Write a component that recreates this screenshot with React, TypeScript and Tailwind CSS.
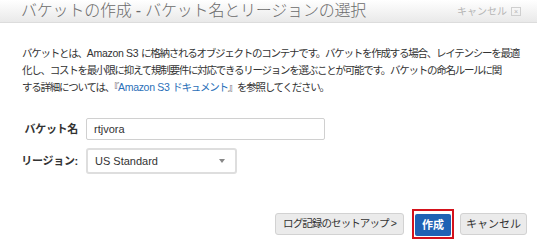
const font = "font-['Liberation_Sans','Noto_Sans_CJK_JP',sans-serif]";

export default function App() {
  return (
    <div className={`w-[537px] h-[241px] bg-white overflow-hidden flex flex-col ${font}`}>
      {/* header */}
      <div className="h-[23px] flex items-center justify-between pl-[21px] pr-[16px] bg-gradient-to-b from-white to-[#e9e9e9] border-b border-[#dcdcdc]">
        <span className="text-[16px] font-light text-[#6a6a6a] tracking-[-0.2px]">バケットの作成 - バケット名とリージョンの選択</span>
        <span className="flex items-center gap-[4px] text-[10px] text-[#b5b5b5]">
          キャンセル
          <span className="w-[10px] h-[9px] border border-[#cfcfcf] text-[7px] leading-[7px] flex items-center justify-center">×</span>
        </span>
      </div>

      {/* description */}
      <p className="mt-[22px] px-[22px] text-[10.5px] leading-[17px] text-[#333] tracking-[-1.25px] whitespace-nowrap">
        バケットとは、<span className="tracking-[-0.3px]">Amazon S3 </span>に格納されるオブジェクトのコンテナです。バケットを作成する場合、レイテンシーを最適
        <br />
        化し、コストを最小限に抑えて規制要件に対応できるリージョンを選ぶことが可能です。バケットの命名ルールに関
        <br />
        する詳細については、『<span className="text-[#2a6fb8]"><span className="tracking-[-0.3px]">Amazon S3 </span>ドキュメント</span>』を参照してください。
      </p>

      {/* form */}
      <div className="mt-[22px] grid grid-cols-[78px_auto] gap-x-[8px] gap-y-[8px] items-center">
        <span className="text-right text-[11px] font-bold text-[#333] tracking-[-0.3px]">バケット名</span>
        <div className="w-[239px] h-[22px] border border-[#d0d0d0] rounded-[2px] flex items-center px-[7px] text-[11px] text-[#333]">rtjvora</div>
        <span className="text-right text-[11px] font-bold text-[#333] tracking-[-0.3px]">リージョン:</span>
        <div className="w-[151px] h-[26px] border-2 border-[#dedede] rounded-[3px] flex items-center justify-between pl-[7px] pr-[10px] text-[11px] text-[#333]">
          US Standard
          <span className="w-0 h-0 border-l-[3px] border-r-[3px] border-t-[4px] border-l-transparent border-r-transparent border-t-[#888]" />
        </div>
      </div>

      {/* buttons */}
      <div className="mt-auto mb-[2px] flex items-center justify-end pr-[10px]">
        <button className="h-[22px] w-[129px] rounded-[3px] border border-[#d2d2d2] bg-[#ebebeb] text-[10.5px] text-[#333] tracking-[-0.9px] mr-[8px]">ログ記録のセットアップ &gt;</button>
        <div className="border-2 border-[#d4121b] p-[1px] mr-[6px]">
          <button className="h-[22px] w-[36px] rounded-[2px] bg-[#1f62b4] text-[11px] font-bold text-white">作成</button>
        </div>
        <button className="h-[22px] w-[67px] rounded-[3px] border border-[#d2d2d2] bg-[#ebebeb] text-[11px] text-[#333]">キャンセル</button>
      </div>
    </div>
  );
}
